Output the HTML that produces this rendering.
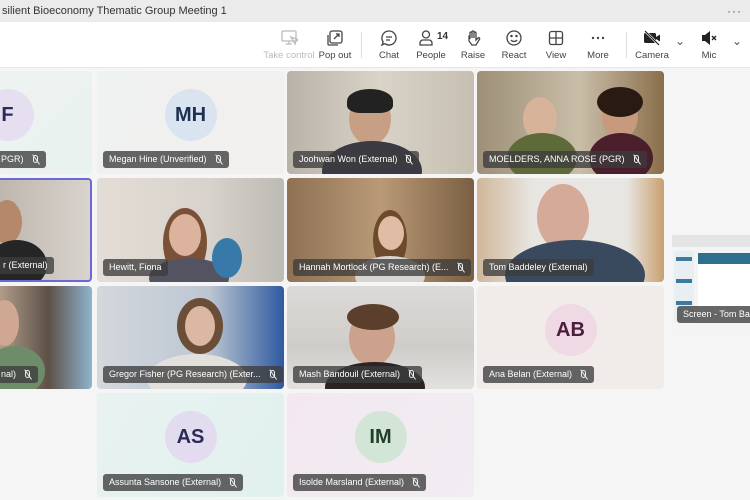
<!DOCTYPE html>
<html><head><meta charset="utf-8"><style>
*{margin:0;padding:0;box-sizing:border-box}
body{width:750px;height:500px;overflow:hidden;background:#f5f5f5;font-family:"Liberation Sans",sans-serif;position:relative}
.title{position:absolute;left:0;top:0;width:750px;height:22px;background:#ebebeb;font-size:11px;color:#333;line-height:22px;padding-left:2px}
.dots{position:absolute;right:8px;top:0;font-size:12px;color:#555;letter-spacing:1px}
.tb{position:absolute;left:0;top:22px;width:750px;height:46px;background:#fff;border-bottom:1px solid #e6e6e6}
.bt{position:absolute;top:0;width:60px;margin-left:-30px;text-align:center;font-size:9.5px;color:#444;white-space:nowrap}
.bt svg{display:block;margin:7px auto 3px;width:18px;height:18px}
.sep{position:absolute;top:10px;width:1px;height:26px;background:#ddd}
.t{position:absolute;border-radius:4px;overflow:hidden}
.lb{position:absolute;left:6px;bottom:6px;height:17px;background:rgba(60,60,60,.78);color:#fff;font-size:9px;line-height:17px;padding:0 6px;border-radius:3px;white-space:nowrap}
.lb i{display:inline-block;width:5px;height:8px;margin-left:9px;margin-right:2px;vertical-align:-1px;border:1.2px solid #eee;border-radius:3px;position:relative}
.lb i:after{content:"";position:absolute;left:-4px;top:3px;width:12px;height:1.2px;background:#eee;transform:rotate(55deg)}
.av{position:absolute;width:52px;height:52px;border-radius:50%;font-size:20px;font-weight:bold;line-height:52px;text-align:center;color:#2b2b5a;left:50%;top:50%;margin:-34px 0 0 -26px}
.b{position:absolute;border-radius:50%}
</style></head><body>
<div class="title">silient Bioeconomy Thematic Group Meeting 1<span class="dots">···</span></div>
<div class="tb">
<div class="bt" style="left:289px;color:#bbb"><svg viewBox="0 0 18 18" fill="none" stroke="#bbb" stroke-width="1.3"><rect x="2" y="2" width="14" height="10" rx="1"/><path d="M9 12v3M6 15h6M11 8l4 7 1-3 3-1z"/></svg>Take control</div>
<div class="bt" style="left:335px"><svg viewBox="0 0 18 18" fill="none" stroke="#444" stroke-width="1.3"><rect x="4" y="2" width="12" height="12" rx="2"/><path d="M2 6v9a1 1 0 0 0 1 1h9M8 10l5-5M10 5h3v3"/></svg>Pop out</div>
<div class="sep" style="left:361px"></div>
<div class="bt" style="left:389px"><svg viewBox="0 0 18 18" fill="none" stroke="#444" stroke-width="1.3"><path d="M9 2a7 7 0 1 1-4 12.7L2 16l1.2-3A7 7 0 0 1 9 2zM6 8h6M6 11h4"/></svg>Chat</div>
<div class="bt" style="left:431px"><svg viewBox="0 0 18 18" fill="none" stroke="#444" stroke-width="1.3" style="margin-left:16px"><circle cx="9" cy="5.5" r="3.5"/><path d="M3 16v-2a3 3 0 0 1 3-3h6a3 3 0 0 1 3 3v2z"/></svg><span style="position:absolute;left:36px;top:9px;font-weight:bold;font-size:10px;color:#333">14</span>People</div>
<div class="bt" style="left:473px"><svg viewBox="0 0 18 18" fill="none" stroke="#444" stroke-width="1.3"><path d="M6 10V4a1 1 0 0 1 2 0v5V3a1 1 0 0 1 2 0v6V4a1 1 0 0 1 2 0v7l2-2a1 1 0 0 1 1.5 1.3L12 16H8l-3-4V7a1 1 0 0 1 1 0"/></svg>Raise</div>
<div class="bt" style="left:514px"><svg viewBox="0 0 18 18" fill="none" stroke="#444" stroke-width="1.3"><circle cx="9" cy="9" r="7"/><path d="M6 11c1.5 2 4.5 2 6 0"/><circle cx="6.5" cy="7" r=".6"/><circle cx="11.5" cy="7" r=".6"/></svg>React</div>
<div class="bt" style="left:556px"><svg viewBox="0 0 18 18" fill="none" stroke="#444" stroke-width="1.3"><rect x="2.5" y="2.5" width="13" height="13" rx="2"/><path d="M9 2.5v13M2.5 9h13"/></svg>View</div>
<div class="bt" style="left:598px"><svg viewBox="0 0 18 18" fill="#444"><circle cx="4" cy="9" r="1.2"/><circle cx="9" cy="9" r="1.2"/><circle cx="14" cy="9" r="1.2"/></svg>More</div>
<div class="sep" style="left:626px"></div>
<div class="bt" style="left:652px"><svg viewBox="0 0 18 18"><rect x="1" y="4" width="12" height="10" rx="1.5" fill="#222"/><path d="M13 8l4-2.5v7L13 10z" fill="#222"/><path d="M2 2l14 14" stroke="#fff" stroke-width="2.4"/><path d="M2 2l14 14" stroke="#222" stroke-width="1.2"/></svg>Camera</div>
<div class="bt" style="left:680px;font-size:12px;top:12px;color:#555">⌄</div>
<div class="bt" style="left:709px"><svg viewBox="0 0 18 18"><path d="M2 6h3l5-4v14l-5-4H2z" fill="#222"/><path d="M12 7l4 4M16 7l-4 4" stroke="#222" stroke-width="1.3"/></svg>Mic</div>
<div class="bt" style="left:737px;font-size:12px;top:12px;color:#555">⌄</div>
</div>

<div class="t" style="left:-5px;top:71px;width:97px;height:103px;background:linear-gradient(135deg,#eef3f1,#e8f2ef)"><div class="av" style="background:#e6dff0;margin-left:-62px">F</div><div class="lb" style="left:0">PGR)<i></i></div></div>
<div class="t" style="left:97px;top:71px;width:187px;height:103px;background:linear-gradient(120deg,#eef2f0,#f3efee)"><div class="av" style="background:#d9e4f0;color:#1e3050">MH</div><div class="lb">Megan Hine (Unverified)<i></i></div></div>
<div class="t" style="left:287px;top:71px;width:187px;height:103px;background:linear-gradient(90deg,#b8b2a8,#d9d3c8 50%,#c6bfb1)"><div class="b" style="left:62px;top:22px;width:42px;height:52px;background:#c79f85"></div><div class="b" style="left:60px;top:18px;width:46px;height:24px;background:#222;border-radius:50% 50% 30% 30%"></div><div class="b" style="left:35px;top:70px;width:100px;height:60px;background:#3b3a44"></div><div class="lb">Joohwan Won (External)<i></i></div></div>
<div class="t" style="left:477px;top:71px;width:187px;height:103px;background:linear-gradient(90deg,#9d8f78,#c9bea8 55%,#8a6e4b)"><div class="b" style="left:46px;top:26px;width:34px;height:44px;background:#d7b39a"></div><div class="b" style="left:125px;top:22px;width:36px;height:46px;background:#c89a7d"></div><div class="b" style="left:120px;top:16px;width:46px;height:30px;background:#2a1a14"></div><div class="b" style="left:30px;top:62px;width:70px;height:50px;background:#5f6a3a"></div><div class="b" style="left:112px;top:62px;width:64px;height:50px;background:#4a1f2b"></div><div class="lb">MOELDERS, ANNA ROSE (PGR)<i></i></div></div>

<div class="t" style="left:-5px;top:178px;width:97px;height:104px;background:linear-gradient(90deg,#bdb6ad,#d8d3cd);border:2px solid #6b69d6"><div class="b" style="left:-5px;top:20px;width:30px;height:44px;background:#b5876b"></div><div class="b" style="left:-10px;top:60px;width:60px;height:50px;background:#252525"></div><div class="lb" style="left:0">r (External)</div></div>
<div class="t" style="left:97px;top:178px;width:187px;height:104px;background:linear-gradient(90deg,#e3ddd6,#d8d2cc 60%,#bdb9b3)"><div class="b" style="left:66px;top:30px;width:44px;height:70px;background:#7a5037"></div><div class="b" style="left:72px;top:36px;width:32px;height:42px;background:#dcb39d"></div><div class="b" style="left:52px;top:80px;width:80px;height:40px;background:#545361"></div><div class="b" style="left:115px;top:60px;width:30px;height:40px;background:#3779a8"></div><div class="lb">Hewitt, Fiona</div></div>
<div class="t" style="left:287px;top:178px;width:187px;height:104px;background:linear-gradient(90deg,#8e7154,#b99a77 50%,#7b5f43)"><div class="b" style="left:86px;top:32px;width:34px;height:60px;background:#6e4a2c"></div><div class="b" style="left:91px;top:38px;width:26px;height:34px;background:#e1bca4"></div><div class="b" style="left:68px;top:78px;width:70px;height:40px;background:#d8d4d2"></div><div class="lb">Hannah Mortlock (PG Research) (E...<i></i></div></div>
<div class="t" style="left:477px;top:178px;width:187px;height:104px;background:linear-gradient(90deg,#cfb79a,#e8e6e2 30%,#e8e6e2 80%,#c9a070)"><div class="b" style="left:60px;top:6px;width:52px;height:66px;background:#d5aa98"></div><div class="b" style="left:28px;top:62px;width:140px;height:70px;background:#3a4a5e"></div><div class="lb">Tom Baddeley (External)</div></div>

<div class="t" style="left:-5px;top:286px;width:97px;height:103px;background:linear-gradient(90deg,#b9a58f,#5c5048 55%,#8fb4cc)"><div class="b" style="left:-4px;top:14px;width:28px;height:46px;background:#d0a792"></div><div class="b" style="left:-10px;top:60px;width:60px;height:50px;background:#6f8c6a"></div><div class="lb" style="left:0">nal)<i></i></div></div>
<div class="t" style="left:97px;top:286px;width:187px;height:103px;background:linear-gradient(90deg,#d4d8dd,#bcc6d2 60%,#2f5aa0)"><div class="b" style="left:80px;top:12px;width:46px;height:56px;background:#6a4e38"></div><div class="b" style="left:88px;top:20px;width:30px;height:40px;background:#dcb7a3"></div><div class="b" style="left:50px;top:68px;width:100px;height:50px;background:#e2e0dc"></div><div class="lb">Gregor Fisher (PG Research) (Exter...<i></i></div></div>
<div class="t" style="left:287px;top:286px;width:187px;height:103px;background:linear-gradient(180deg,#dcdad8,#cfccc9 60%,#e3e1df)"><div class="b" style="left:62px;top:24px;width:46px;height:56px;background:#cca28c"></div><div class="b" style="left:60px;top:18px;width:52px;height:26px;background:#5b3f2c"></div><div class="b" style="left:38px;top:76px;width:100px;height:50px;background:#2c2424"></div><div class="lb">Mash Bandouil (External)<i></i></div></div>
<div class="t" style="left:477px;top:286px;width:187px;height:103px;background:#f1ecea"><div class="av" style="background:#eed9e4;color:#4a1e3c">AB</div><div class="lb">Ana Belan (External)<i></i></div></div>

<div class="t" style="left:97px;top:393px;width:187px;height:104px;background:linear-gradient(120deg,#e9f2f0,#e0f1ee)"><div class="av" style="background:#e2dcee">AS</div><div class="lb">Assunta Sansone (External)<i></i></div></div>
<div class="t" style="left:287px;top:393px;width:187px;height:104px;background:linear-gradient(120deg,#f3e8f0,#f1edf2)"><div class="av" style="background:#d3e5d6;color:#1f3e2a">IM</div><div class="lb">Isolde Marsland (External)<i></i></div></div>

<div class="t" style="left:672px;top:235px;width:80px;height:96px;background:#f4f4f4;border-radius:2px">
<div style="position:absolute;left:0;top:0;width:80px;height:12px;background:#e4e4e4"></div>
<div style="position:absolute;left:2px;top:16px;width:20px;height:70px;background:#e9eef2"></div>
<div style="position:absolute;left:4px;top:22px;width:16px;height:4px;background:#3a7ca0"></div>
<div style="position:absolute;left:4px;top:44px;width:16px;height:4px;background:#3a7ca0"></div>
<div style="position:absolute;left:4px;top:66px;width:16px;height:4px;background:#3a7ca0"></div>
<div style="position:absolute;left:26px;top:18px;width:54px;height:60px;background:#fff"></div>
<div style="position:absolute;left:26px;top:18px;width:54px;height:11px;background:#2f6f8e"></div>
<div class="lb" style="left:5px;bottom:8px;font-size:9px">Screen - Tom Bad</div>
</div>
</body></html>
